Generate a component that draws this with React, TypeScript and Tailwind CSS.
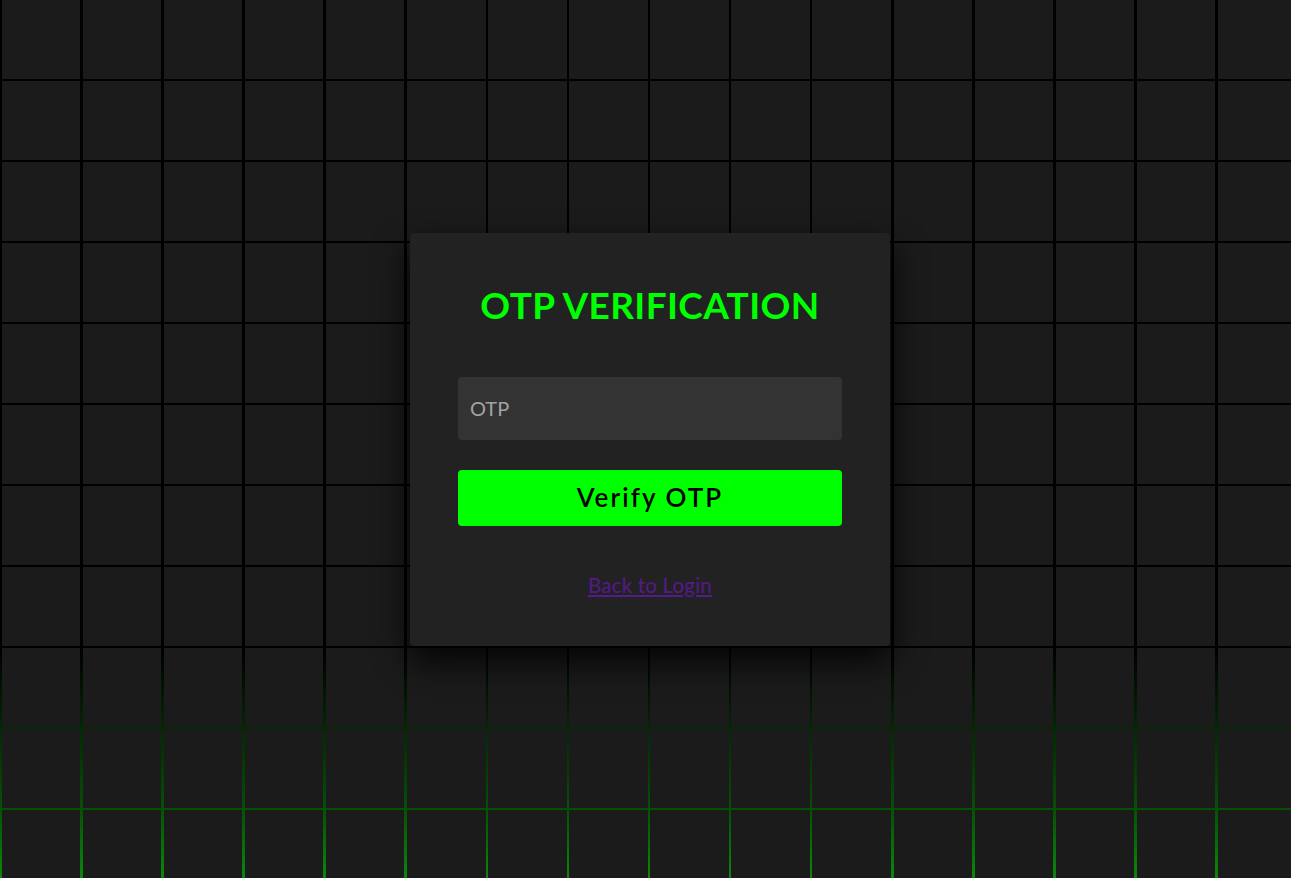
import React from "react";

const squares = Array.from({ length: 16 * 11 }, (_, i) => i);

export default function App() {
  return (
    <div className="relative h-screen w-full overflow-hidden bg-black font-['Lato',sans-serif]">
      {/* grid background */}
      <section className="grid h-screen w-full grid-cols-[repeat(16,78.6px)] content-start gap-x-[2.5px] gap-y-[2px] overflow-hidden bg-[linear-gradient(to_bottom,#000_0%,#000_74%,#042804_83%,#064f06_92%,#0a880a_100%)] pl-[1.5px]">
        {squares.map((i) => (
          <span key={i} className="block h-[79px] bg-[#1b1b1b]" />
        ))}
      </section>

      {/* card */}
      <div className="absolute inset-0 flex items-center justify-center pl-[9px]">
        <div className="flex h-[413px] w-[480px] flex-col items-center rounded bg-[#222] px-12 pt-[48px] shadow-[0_15px_35px_rgba(0,0,0,0.9)]">
          <h2 className="text-[37px] font-bold leading-[48px] tracking-[0.01em] text-[#00ff00]">
            OTP VERIFICATION
          </h2>
          <div className="mt-[48px] w-full">
            <input
              type="text"
              placeholder="OTP"
              className="h-[63px] w-full rounded bg-[#333] px-3 text-[20px] text-white outline-none placeholder:text-[#a3a3a3]"
            />
          </div>
          <button className="mt-[30px] h-[56px] w-full rounded bg-[#00ff00] text-[26px] font-semibold tracking-[0.08em] text-black">
            Verify OTP
          </button>
          <a
            href="#"
            className="mt-[46px] text-[20.5px] leading-[26px] tracking-[0.01em] text-[#551a8b] underline"
          >
            Back to Login
          </a>
        </div>
      </div>
    </div>
  );
}
